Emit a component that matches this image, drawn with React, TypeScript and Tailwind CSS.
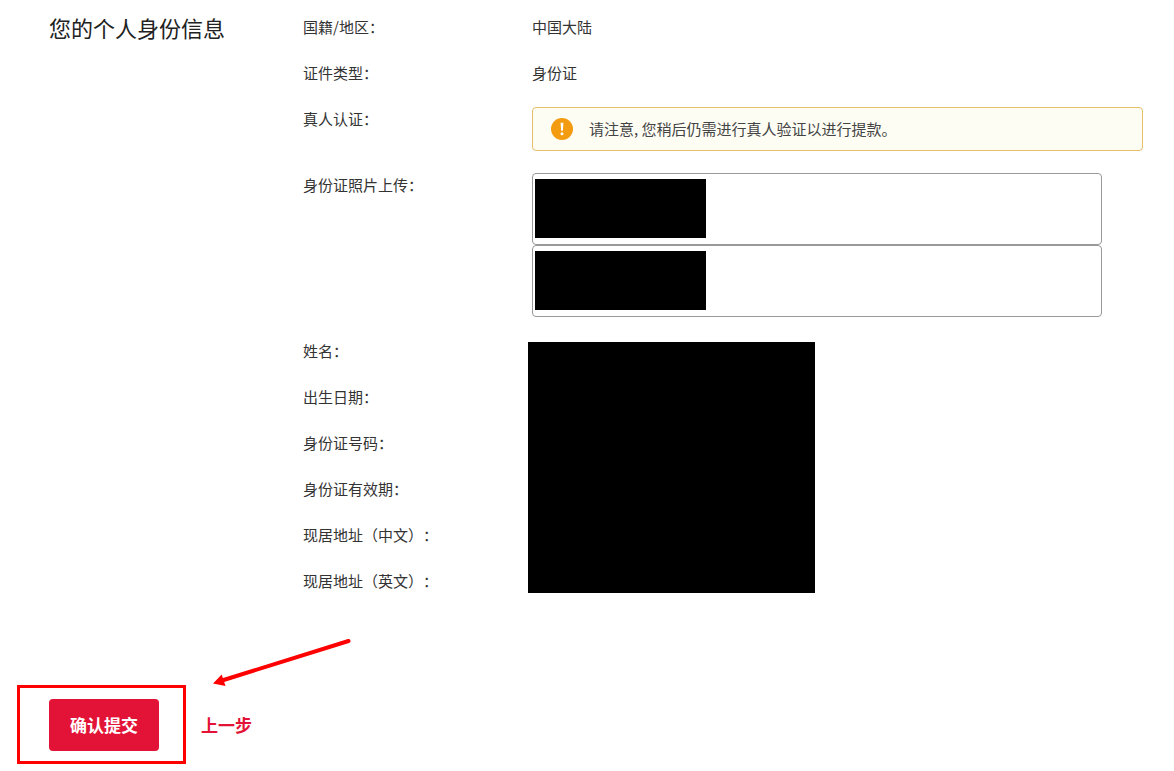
import React from "react";

const identityFields = [
  { id: 1, label: "姓名：" },
  { id: 2, label: "出生日期：" },
  { id: 3, label: "身份证号码：" },
  { id: 4, label: "身份证有效期：" },
  { id: 5, label: "现居地址（中文）：" },
  { id: 6, label: "现居地址（英文）：" },
];

const uploads = [
  { id: "front", name: "身份证正面" },
  { id: "back", name: "身份证背面" },
];

type rowProps = {
  label: string;
  children: React.ReactNode;
};

function Row({ label, children }: rowProps) {
  return (
    <div className="flex flex-row items-start">
      <dt className="w-[229px] shrink-0">{label}</dt>
      <dd className="min-w-0 flex-1">{children}</dd>
    </div>
  );
}

function Notice() {
  return (
    <div
      role="note"
      className="flex h-11 flex-row items-center gap-4 rounded border border-[#e6bf6b] bg-[#fdfdf4] px-[18px] text-[#444444]"
    >
      <svg viewBox="0 0 22 22" className="h-[22px] w-[22px] shrink-0" aria-hidden="true">
        <circle cx="11" cy="11" r="11" fill="#f39c12" />
        <path d="M9.6 4.8h2.8l-.5 8h-1.8z" fill="#fff" />
        <circle cx="11" cy="15.8" r="1.5" fill="#fff" />
      </svg>
      <p>请注意, 您稍后仍需进行真人验证以进行提款。</p>
    </div>
  );
}

export default function App() {
  return (
    <main
      lang="zh-CN"
      className="bg-white pr-[31px] pb-5 pl-[49px] font-['Noto_Sans_CJK_SC',sans-serif] text-[15px] leading-6 text-[#333333] [text-spacing-trim:space-all]"
    >
      <section className="flex flex-row items-start pt-[15px]">
        <h1 className="w-[254px] shrink-0 text-[22px] leading-6 text-[#222222]">
          您的个人身份信息
        </h1>
        <div className="flex min-w-0 flex-1 flex-col gap-[22px]">
          <dl className="flex flex-col gap-[22px]">
            <Row label="国籍/地区：">中国大陆</Row>
            <Row label="证件类型：">身份证</Row>
            <Row label="真人认证：">
              <Notice />
            </Row>
            <Row label="身份证照片上传：">
              {uploads.map(({ id, name }) => (
                <div
                  key={id}
                  aria-label={name}
                  className="h-[72px] max-w-[570px] rounded border border-[#999999] pt-[5px] pl-[2px]"
                >
                  <div className="h-[59px] w-[171px] bg-black" />
                </div>
              ))}
            </Row>
          </dl>
          {/* personal values are covered by a single block */}
          <div className="flex flex-row">
            <ul className="flex w-[225px] shrink-0 flex-col gap-[22px]">
              {identityFields.map(({ id, label }) => (
                <li key={id}>{label}</li>
              ))}
            </ul>
            <div className="mt-[3px] w-[287px] bg-black" />
          </div>
        </div>
      </section>

      <footer className="mt-[106px] flex flex-row items-center gap-[42px] text-[17px] font-bold">
        <div className="relative">
          <button
            type="button"
            className="h-[52px] w-[110px] cursor-pointer rounded bg-[#e31337] text-white"
          >
            确认提交
          </button>
          <div className="pointer-events-none absolute -top-[14px] -right-[27px] -bottom-[13px] -left-[32px] border-[3px] border-[#ff0000]" />
          <svg
            viewBox="0 0 140 50"
            className="pointer-events-none absolute -top-[62px] left-[163px] h-[50px] w-[140px]"
            aria-hidden="true"
          >
            <path d="M10 43.5 136.5 4" stroke="#ff0000" strokeWidth="4" strokeLinecap="round" />
            <path d="M1 46.5 9.7 37.5 13.5 49z" fill="#ff0000" />
          </svg>
        </div>
        <a href="#previous" className="text-[#e31337]">
          上一步
        </a>
      </footer>
    </main>
  );
}
